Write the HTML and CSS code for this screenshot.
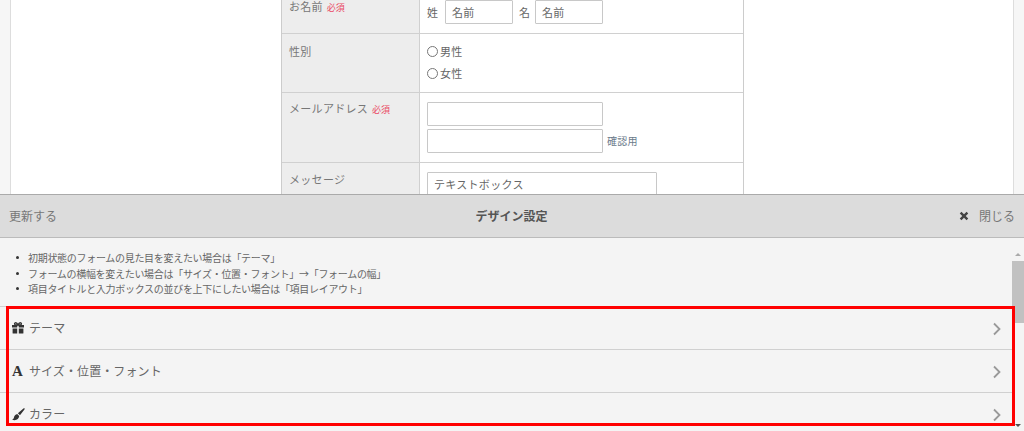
FILE: index.html
```html
<!DOCTYPE html>
<html lang="ja">
<head>
<meta charset="utf-8">
<title>デザイン設定</title>
<link rel="stylesheet" href="styles.css">
</head>
<body>
<main class="page">
  <div class="sheet">
    <div class="form">
      <div class="row row-name">
        <div class="label">お名前 <span class="req">必須</span></div>
        <div class="field name-field">
          <span>姓</span><span class="input name-input">名前</span>
          <span class="mei">名</span><span class="input name-input">名前</span>
        </div>
      </div>
      <div class="row row-sex">
        <div class="label">性別</div>
        <div class="field radios">
          <div class="radio"><i class="dot"></i>男性</div>
          <div class="radio"><i class="dot"></i>女性</div>
        </div>
      </div>
      <div class="row row-mail">
        <div class="label label-mail">メールアドレス <span class="req">必須</span></div>
        <div class="field mails">
          <span class="input mail-input"></span>
          <div class="confirm"><span class="input mail-input"></span><span class="confirm-text">確認用</span></div>
        </div>
      </div>
      <div class="row row-msg">
        <div class="label label-msg">メッセージ</div>
        <div class="field"><span class="input msg-input">テキストボックス</span></div>
      </div>
    </div>
  </div>
</main>
<section class="panel">
  <header class="bar">
    <span class="update">更新する</span>
    <strong class="title">デザイン設定</strong>
    <span class="close">
      <svg class="x" width="10" height="10" viewBox="0 0 10 10"><path d="M1.6 1.6l6.8 6.8M8.4 1.6l-6.8 6.8" stroke="#444" stroke-width="2.4" fill="none"/></svg>
      閉じる
    </span>
  </header>
  <div class="content">
    <div class="scroll">
      <ul class="notes">
        <li>初期状態のフォームの見た目を変えたい場合は「テーマ」</li>
        <li>フォームの横幅を変えたい場合は「サイズ・位置・フォント」→「フォームの幅」</li>
        <li>項目タイトルと入力ボックスの並びを上下にしたい場合は「項目レイアウト」</li>
      </ul>
      <div class="acc">
        <svg class="ic ic-gift" width="12" height="12" viewBox="0 0 12 12"><path fill="#333" d="M0 3h5.200v2.600H0zM6.800 3H12v2.600H6.800zM.6 6.600h4.600V11.500H1.100a.5.5 0 0 1-.5-.5zM6.800 6.600h4.600V11a.5.5 0 0 1-.5.5H6.800z"/><path fill="none" stroke="#333" stroke-width="1.300" d="M6 3C5.300 1.200 4.200.6 3.300.8 2.200 1.100 2.300 3 3.800 3h4.400C9.700 3 9.800 1.100 8.700.8 7.800.6 6.700 1.200 6 3z"/></svg>
        <span class="acc-t">テーマ</span>
        <svg class="chev" width="8" height="14" viewBox="0 0 8 14"><path d="M1 1.500L6.500 7 1 12.500" fill="none" stroke="#999" stroke-width="1.800"/></svg>
      </div>
      <div class="acc">
        <span class="ic-a">A</span>
        <span class="acc-t">サイズ・位置・フォント</span>
        <svg class="chev" width="8" height="14" viewBox="0 0 8 14"><path d="M1 1.500L6.500 7 1 12.500" fill="none" stroke="#999" stroke-width="1.800"/></svg>
      </div>
      <div class="acc">
        <svg class="ic ic-brush" width="13" height="13" viewBox="0 0 14 14"><path fill="#333" d="M13.500.4c.3.3.2.8-.1 1.200L8.600 7.900 6.300 5.700 12.300.6c.4-.3.900-.500 1.200-.2zM5.600 6.500l2.200 2.200c-.2 2.500-2.300 4.400-5 4.400-1 0-2-.3-2.800-.8 1.300-.2 1.900-.8 2.100-2 .3-2 1.700-3.500 3.500-3.800z"/></svg>
        <span class="acc-t">カラー</span>
        <svg class="chev" width="8" height="14" viewBox="0 0 8 14"><path d="M1 1.500L6.500 7 1 12.500" fill="none" stroke="#999" stroke-width="1.800"/></svg>
      </div>
    </div>
    <div class="scrollbar">
      <i class="arrow up"></i>
      <i class="thumb"></i>
      <i class="arrow down"></i>
    </div>
  </div>
  <div class="marker"></div>
</section>
</body>
</html>
```
FILE: styles.css
```css
* { box-sizing: border-box; }
html, body { margin: 0; height: 431px; overflow: hidden; }
body {
  position: relative;
  font-family: "Noto Sans CJK JP", "Liberation Sans", sans-serif;
  color: #666;
  background: #f6f6f6;
}
.page { height: 194px; padding: 0 10px; overflow: hidden; }
.sheet {
  height: 194px;
  background: #fff;
  border-left: 1px solid #ddd;
  border-right: 1px solid #ddd;
  padding-left: 270px;
}
.form {
  width: 463px;
  border-left: 1px solid #ccc;
  border-right: 1px solid #ccc;
  font-size: 11px;
}
.row { display: flex; border-bottom: 1px solid #d0d0d0; }
.row-name { height: 34px; }
.row-sex { height: 59px; }
.row-mail { height: 70px; }
.row-msg { height: 60px; }
.label {
  width: 138px;
  flex: none;
  background: #ededed;
  border-right: 1px solid #d0d0d0;
  padding: 0 7px;
  letter-spacing: .3px;
  line-height: 12px;
  color: #777;
}
.row-sex .label { padding-top: 11px; }
.label-mail { padding-top: 9px; }
.label-msg { padding-top: 10px; }
.req { color: #ea4a64; font-size: 9px; line-height: 1; letter-spacing: 0; margin-left: 1px; }
.field { flex: 1; padding: 9px 7px 0; }
.name-field { display: flex; align-items: center; padding-top: 0; height: 24px; }
.input {
  display: block;
  background: #fff;
  border: 1px solid #c8c8c8;
  border-radius: 1px;
  color: #666;
  line-height: 22px;
  padding-left: 6px;
  letter-spacing: .3px;
}
.name-input { width: 68px; height: 24px; margin-left: 7px; }
.mei { margin-left: 6px; }
.mei + .name-input { margin-left: 5px; }
.radios { padding-top: 6px; }
.radio { display: flex; align-items: center; height: 22px; letter-spacing: .3px; }
.dot { width: 11px; height: 11px; border: 1px solid #777; border-radius: 50%; margin-right: 2px; }
.mail-input { width: 176px; height: 24px; }
.confirm { display: flex; align-items: center; margin-top: 3px; }
.confirm-text { margin: 0 0 2px 4px; font-size: 10px; letter-spacing: .3px; color: #6a7a8a; }
.msg-input { width: 230px; height: 40px; }

.panel { height: 237px; position: relative; display: flex; flex-direction: column; background: #f4f4f4; }
.bar {
  height: 44px;
  flex: none;
  background: #dcdcdc;
  border-top: 1px solid #aaa;
  border-bottom: 1px solid #bbb;
  display: grid;
  grid-template-columns: 1fr auto 1fr;
  align-items: center;
  padding: 0 9px 1px;
  font-size: 12px;
  line-height: 14px;
  color: #777;
}
.title { color: #555; font-weight: bold; margin-left: -1px; }
.close { justify-self: end; display: flex; align-items: center; gap: 10px; }
.content { flex: 1; display: flex; min-height: 0; overflow: hidden; }
.scroll { flex: 1; min-width: 0; }
.notes {
  margin: 0;
  height: 68px;
  padding: 12px 0 0 28px;
  font-size: 10px;
  line-height: 15.5px;
  letter-spacing: -.3px;
  color: #666;
  list-style: none;
}
.notes li { position: relative; }
.notes li::before {
  content: "";
  position: absolute;
  left: -12px;
  top: 6px;
  width: 3px;
  height: 3px;
  border-radius: 50%;
  background: #333;
}
.acc {
  height: 43px;
  display: flex;
  align-items: center;
  padding: 0 11px 0 12px;
  border-top: 1px solid #d0d0d0;
  font-size: 12px;
  color: #666;
}
.acc-t { margin-left: 5px; margin-bottom: 2px; letter-spacing: .1px; }
.ic-brush + .acc-t { margin-left: 4px; }
.ic, .ic-a { flex: none; }
.ic-a { font: bold 15px/16px "Liberation Serif", serif; color: #333; width: 12px; }
.chev { margin-left: auto; margin-top: 2px; }
.scrollbar {
  width: 12px;
  flex: none;
  margin-top: 10px;
  display: flex;
  flex-direction: column;
  align-items: center;
}
.arrow { width: 0; height: 0; border-left: 3px solid transparent; border-right: 3px solid transparent; }
.up { border-bottom: 3px solid #aaa; margin-top: 5px; }
.down { border-top: 3px solid #505050; margin-top: auto; margin-bottom: 4px; }
.thumb { width: 100%; height: 62px; background: #c1c1c1; margin-top: 5px; }
.marker {
  position: absolute;
  left: 6px;
  top: 112px;
  width: 1009px;
  height: 120px;
  border: 3px solid #f00;
  pointer-events: none;
}
```
